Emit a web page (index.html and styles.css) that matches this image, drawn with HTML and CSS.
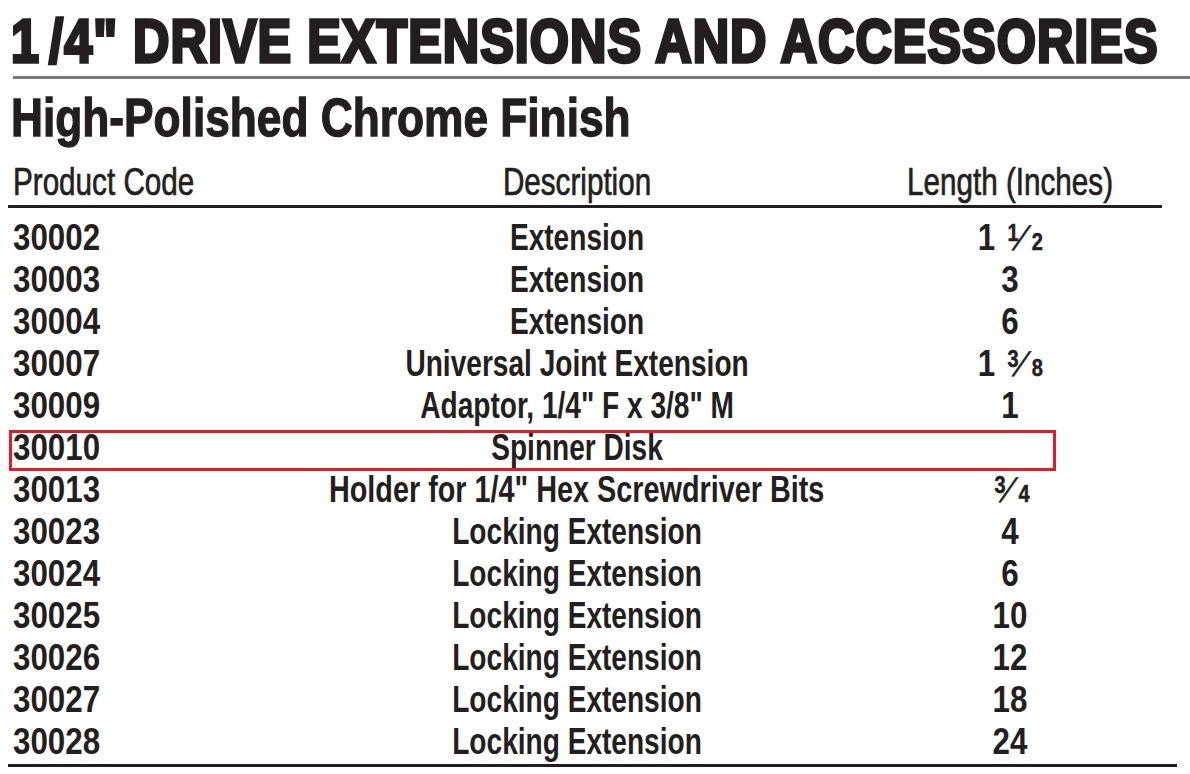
FILE: index.html
```html
<!DOCTYPE html>
<html lang="en">
<head>
<meta charset="utf-8">
<title>1/4" Drive Extensions and Accessories</title>
<link rel="stylesheet" href="styles.css">
</head>
<body>
<div class="page">
  <h1 class="title"><span class="sx"><span class="one">1</span>/4" DRIVE EXTENSIONS AND ACCESSORIES</span></h1>
  <h2 class="subtitle"><span class="sx">High-Polished Chrome Finish</span></h2>
  <div class="table">
    <div class="row thead">
      <div class="c1"><span class="sx">Product Code</span></div>
      <div class="c2"><span class="sx">Description</span></div>
      <div class="c3"><span class="sx">Length (Inches)</span></div>
    </div>
    <div class="tbody">
      <div class="row"><div class="c1"><span class="sx">30002</span></div><div class="c2"><span class="sx">Extension</span></div><div class="c3"><span class="sx">1 <span class="frac"><span class="num">1</span><span class="sl">/</span><span class="den">2</span></span></span></div></div>
      <div class="row"><div class="c1"><span class="sx">30003</span></div><div class="c2"><span class="sx">Extension</span></div><div class="c3"><span class="sx">3</span></div></div>
      <div class="row"><div class="c1"><span class="sx">30004</span></div><div class="c2"><span class="sx">Extension</span></div><div class="c3"><span class="sx">6</span></div></div>
      <div class="row"><div class="c1"><span class="sx">30007</span></div><div class="c2"><span class="sx">Universal Joint Extension</span></div><div class="c3"><span class="sx">1 <span class="frac"><span class="num">3</span><span class="sl">/</span><span class="den">8</span></span></span></div></div>
      <div class="row"><div class="c1"><span class="sx">30009</span></div><div class="c2"><span class="sx">Adaptor, 1/4" F x 3/8" M</span></div><div class="c3"><span class="sx">1</span></div></div>
      <div class="row hl"><div class="c1"><span class="sx">30010</span></div><div class="c2"><span class="sx">Spinner Disk</span></div><div class="c3"></div></div>
      <div class="row"><div class="c1"><span class="sx">30013</span></div><div class="c2"><span class="sx wide">Holder for 1/4" Hex Screwdriver Bits</span></div><div class="c3"><span class="sx"><span class="frac"><span class="num">3</span><span class="sl">/</span><span class="den">4</span></span></span></div></div>
      <div class="row"><div class="c1"><span class="sx">30023</span></div><div class="c2"><span class="sx">Locking Extension</span></div><div class="c3"><span class="sx">4</span></div></div>
      <div class="row"><div class="c1"><span class="sx">30024</span></div><div class="c2"><span class="sx">Locking Extension</span></div><div class="c3"><span class="sx">6</span></div></div>
      <div class="row"><div class="c1"><span class="sx">30025</span></div><div class="c2"><span class="sx">Locking Extension</span></div><div class="c3"><span class="sx">10</span></div></div>
      <div class="row"><div class="c1"><span class="sx">30026</span></div><div class="c2"><span class="sx">Locking Extension</span></div><div class="c3"><span class="sx">12</span></div></div>
      <div class="row"><div class="c1"><span class="sx">30027</span></div><div class="c2"><span class="sx">Locking Extension</span></div><div class="c3"><span class="sx">18</span></div></div>
      <div class="row"><div class="c1"><span class="sx">30028</span></div><div class="c2"><span class="sx">Locking Extension</span></div><div class="c3"><span class="sx">24</span></div></div>
    </div>
  </div>
</div>
</body>
</html>
```

FILE: styles.css
```css
html, body {
  margin: 0;
  padding: 0;
  background: #ffffff;
}

body {
  color: #231f20;
  font-family: "Liberation Sans", Arial, Helvetica, sans-serif;
  overflow: hidden;
}

.page {
  padding-top: 9px;
  width: 1190px;
}

.sx {
  display: inline-block;
  white-space: nowrap;
}

.title {
  margin: 0 0 0 13px;
  padding-bottom: 5px;
  border-bottom: 3px solid #7a7a7a;
  font-size: 50px;
  line-height: 62px;
  font-weight: 700;
  white-space: nowrap;
}

.title .sx {
  margin-left: -2px;
  letter-spacing: 1px;
  transform: scale(1.008, 1.23);
  transform-origin: 0 28px;
  -webkit-text-stroke: 2.8px #231f20;
}

.title .one {
  margin-right: 9px;
}

.subtitle {
  margin: 12px 0 0 10px;
  font-size: 53px;
  line-height: 53px;
  font-weight: 700;
  white-space: nowrap;
}

.subtitle .sx {
  margin-left: 1px;
  transform: scaleX(0.835);
  transform-origin: 0 50%;
  -webkit-text-stroke: 1.3px #231f20;
}

.table {
  margin: 19px 0 0 8px;
  width: 1154px;
}

.row {
  display: grid;
  grid-template-columns: 288px 562px 304px;
  height: 42px;
  line-height: 42px;
  font-size: 36px;
  font-weight: 700;
  position: relative;
}

.c1 {
  padding-left: 5px;
  text-align: left;
}

.c2, .c3 {
  display: flex;
  justify-content: center;
}

.c1 .sx {
  transform: scaleX(0.87);
  transform-origin: 0 50%;
}

.c2 .sx {
  transform: scaleX(0.78);
  transform-origin: 50% 50%;
}

.c2 .sx.wide {
  transform: scaleX(0.8);
}

.c3 .sx {
  transform: scaleX(0.87);
  transform-origin: 50% 50%;
}

.frac {
  display: inline-block;
  margin-left: 1px;
}

.frac .num,
.frac .den {
  font-size: 23px;
  line-height: 0;
  -webkit-text-stroke: 0.5px #231f20;
}

.frac .num {
  margin-left: 3px;
  vertical-align: 9px;
}

.frac .sl {
  display: inline-block;
  width: 26px;
  margin-left: -10px;
  text-align: center;
  font-size: 34px;
  line-height: 34px;
  font-weight: 400;
  transform: skewX(-28deg);
  -webkit-text-stroke: 0.5px #231f20;
}

.frac .den {
  margin-left: -1px;
}

.thead {
  height: 38px;
  line-height: 38px;
  font-size: 38px;
  font-weight: 400;
  padding-bottom: 4px;
  border-bottom: 3px solid #231f20;
}

.thead .sx {
  transform: scaleX(0.78);
  -webkit-text-stroke: 0.7px #231f20;
}

.tbody {
  width: 1169px;
  padding-top: 9px;
  padding-bottom: 1px;
  border-bottom: 3px solid #231f20;
}

.hl::after {
  content: "";
  position: absolute;
  left: 1px;
  top: 3px;
  width: 1047px;
  height: 41px;
  box-sizing: border-box;
  border: 3px solid #e31b23;
  pointer-events: none;
}
```
